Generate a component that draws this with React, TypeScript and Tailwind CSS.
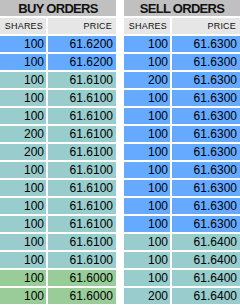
const BLUE = "bg-[#66aaff]";
const TEAL = "bg-[#99cccc]";
const GREEN = "bg-[#99cc99]";

type Order = { shares: number; price: string; tone: string };

const buy: Order[] = [
  { shares: 100, price: "61.6200", tone: BLUE },
  { shares: 100, price: "61.6200", tone: BLUE },
  { shares: 100, price: "61.6100", tone: TEAL },
  { shares: 100, price: "61.6100", tone: TEAL },
  { shares: 100, price: "61.6100", tone: TEAL },
  { shares: 200, price: "61.6100", tone: TEAL },
  { shares: 200, price: "61.6100", tone: TEAL },
  { shares: 100, price: "61.6100", tone: TEAL },
  { shares: 100, price: "61.6100", tone: TEAL },
  { shares: 100, price: "61.6100", tone: TEAL },
  { shares: 100, price: "61.6100", tone: TEAL },
  { shares: 100, price: "61.6100", tone: TEAL },
  { shares: 100, price: "61.6100", tone: TEAL },
  { shares: 100, price: "61.6000", tone: GREEN },
  { shares: 100, price: "61.6000", tone: GREEN },
];

const sell: Order[] = [
  ...[100, 100, 200, 100, 100, 100, 100, 100, 100, 100, 100].map((s) => ({
    shares: s,
    price: "61.6300",
    tone: BLUE,
  })),
  ...[100, 100, 100, 200].map((s) => ({ shares: s, price: "61.6400", tone: TEAL })),
];

function Book({ title, orders }: { title: string; orders: Order[] }) {
  return (
    <div className="flex w-[116px] flex-col gap-[2px]">
      <div className="flex h-4 items-center justify-center bg-[#c0c0c0] text-[13px] font-bold leading-none tracking-[-0.7px] text-[#111]">
        {title}
      </div>
      <div className="grid grid-cols-[46px_68px] gap-[2px] text-[9px] leading-none tracking-[0.2px] text-[#111]">
        <div className="flex h-4 items-center justify-end bg-[#e6e6e6] pr-[3px]">SHARES</div>
        <div className="flex h-4 items-center justify-end bg-[#e6e6e6] pr-[4px]">PRICE</div>
      </div>
      {orders.map((o, i) => (
        <div key={i} className="grid grid-cols-[46px_68px] gap-[2px] text-[12px] leading-none text-black">
          <div className={`flex h-4 items-center justify-end pr-[2px] ${o.tone}`}>{o.shares}</div>
          <div className={`flex h-4 items-center justify-end pr-[3px] ${o.tone}`}>{o.price}</div>
        </div>
      ))}
    </div>
  );
}

export default function App() {
  return (
    <div className="flex h-[306px] w-[240px] gap-2 bg-white font-['Liberation_Sans',Arial,sans-serif]">
      <Book title="BUY ORDERS" orders={buy} />
      <Book title="SELL ORDERS" orders={sell} />
    </div>
  );
}
